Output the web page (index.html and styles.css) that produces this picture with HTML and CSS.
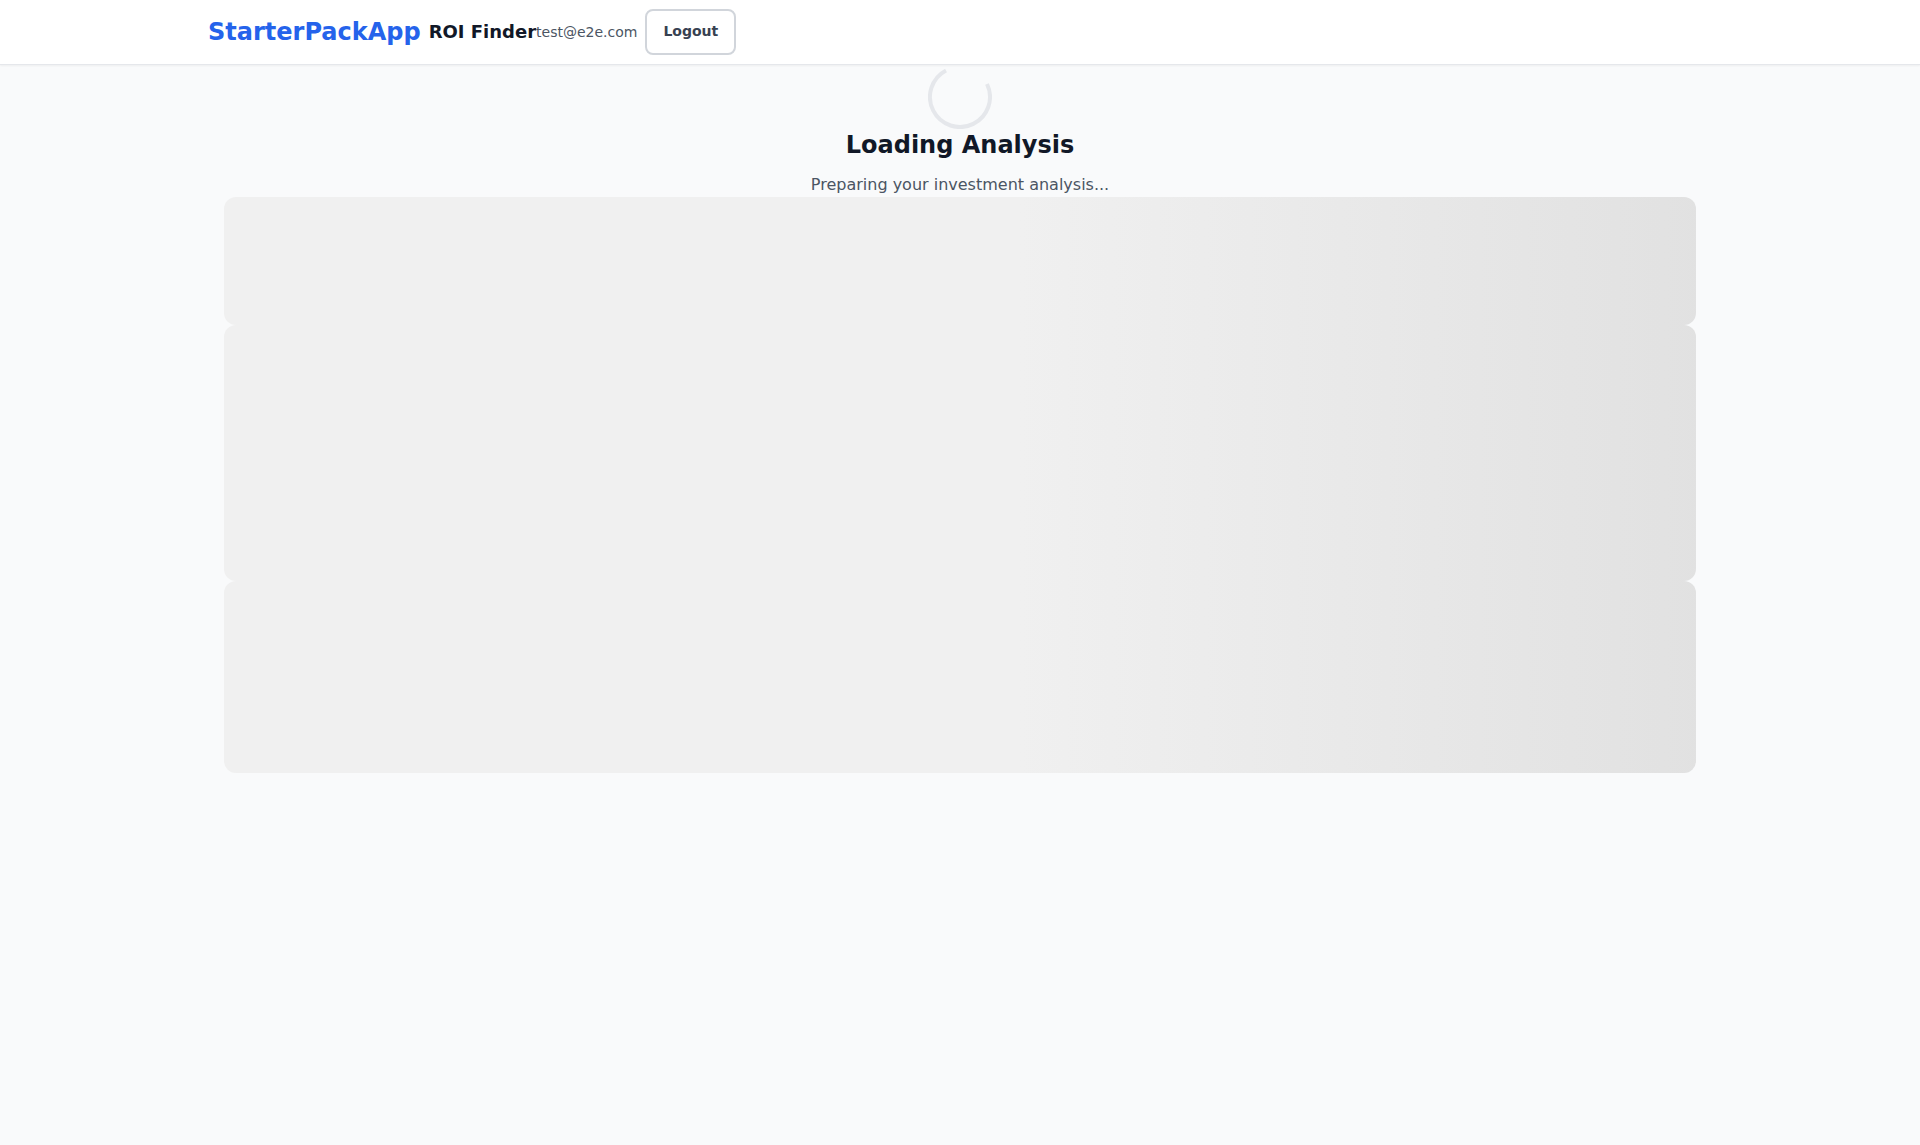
FILE: index.html
```html
<!DOCTYPE html>
<html lang="en">
<head>
<meta charset="utf-8">
<meta name="viewport" content="width=device-width, initial-scale=1">
<title>ROI Finder</title>
<link rel="stylesheet" href="styles.css">
</head>
<body>
<header class="header">
  <div class="header-inner">
    <div class="brand">
      <a class="logo" href="#">StarterPackApp</a>
      <span class="product">ROI Finder</span>
    </div>
    <div class="account">
      <span class="email">test@e2e.com</span>
      <button class="logout" type="button">Logout</button>
    </div>
  </div>
</header>
<main class="main">
  <section class="loading" role="status">
    <svg class="spinner" viewBox="0 0 64 64" aria-hidden="true">
      <path d="M18 5.47A30 30 0 1 0 59 19" fill="none" stroke="#e5e7eb" stroke-width="4"/>
    </svg>
    <h1 class="title">Loading Analysis</h1>
    <p class="message">Preparing your investment analysis...</p>
  </section>
  <div class="skeleton skeleton-small"></div>
  <div class="skeleton skeleton-large"></div>
  <div class="skeleton skeleton-medium"></div>
</main>
</body>
</html>
```
FILE: styles.css
```css
* { box-sizing: border-box; margin: 0; padding: 0; }
body {
  min-height: 100vh;
  background: #f9fafb;
  color: #111827;
  font-family: "DejaVu Sans", sans-serif;
  font-size: 16px;
  line-height: 24px;
}
.header { background: #fff; border-bottom: 1px solid #e5e7eb; box-shadow: 0 1px 2px rgba(0, 0, 0, 0.05); }
.header-inner { display: flex; align-items: center; max-width: 1504px; height: 64px; margin: 0 auto; }
.brand, .account { display: flex; align-items: center; gap: 8px; }
.logo { color: #2563eb; font-size: 24px; line-height: 32px; font-weight: 700; text-decoration: none; }
.product { font-size: 18px; line-height: 28px; font-weight: 600; }
.email { color: #4b5563; font-size: 14px; line-height: 20px; }
.logout {
  padding: 10px 16px 12px;
  border: 2px solid #d1d5db;
  border-radius: 8px;
  background: #fff;
  color: #374151;
  font: 600 14px/20px "DejaVu Sans", sans-serif;
}
.main { max-width: 1504px; margin: 0 auto; padding: 0 16px; }
.loading { display: flex; flex-direction: column; align-items: center; }
.spinner { width: 64px; height: 64px; }
.title { margin-bottom: 12px; font-size: 24px; line-height: 32px; font-weight: 700; }
.message { color: #4b5563; }
.skeleton { border-radius: 12px; background: linear-gradient(90deg, #f0f0f0 54%, #e0e0e0 104%); }
.skeleton-small { height: 128px; }
.skeleton-large { height: 256px; }
.skeleton-medium { height: 192px; }
```
